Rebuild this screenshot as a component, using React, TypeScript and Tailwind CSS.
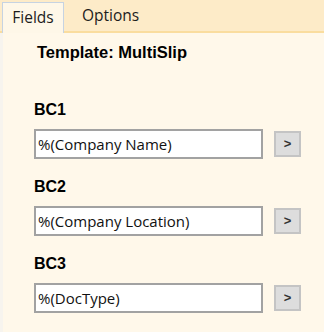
const fields = [
  { label: 'BC1', value: '%(Company Name)' },
  { label: 'BC2', value: '%(Company Location)' },
  { label: 'BC3', value: '%(DocType)' },
]

export default function App() {
  return (
    <div className="w-[324px] h-[332px] flex flex-col bg-[#fff8ea] font-['Open_Sans',sans-serif] text-[#000] overflow-hidden">
      {/* Tab strip */}
      <div className="h-[33px] flex items-end pl-[2px] bg-[#fdebc8] border-b-2 border-[#fadd9f] shrink-0">
        <div className="h-[31px] w-[62px] -mb-[2px] flex items-center justify-center bg-[#fef7e8] border border-b-0 border-[#c6d3e2] text-[15.5px] text-[#1c1c1c]">
          Fields
        </div>
        <div className="h-[31px] flex items-center pl-[18px] text-[15.5px] text-[#1c1c1c]">Options</div>
      </div>

      {/* Body */}
      <div className="flex-1 flex border-l-[3px] border-[#f7f4ee]">
        <div className="flex flex-col pl-[31px] pt-[9px] font-['Liberation_Sans',Arial,sans-serif]">
          <div className="pl-[3px] text-[16.5px] leading-[20px] font-bold">Template: MultiSlip</div>

          <div className="flex flex-col gap-[18px] mt-[38px]">
            {fields.map((f) => (
              <div key={f.label} className="flex flex-col gap-[9px]">
                <div className="text-[16px] leading-[20px] font-bold">{f.label}</div>
                <div className="flex items-center gap-[11px]">
                  <div className="w-[229px] h-[30px] flex items-center px-[2px] bg-white border-2 border-[#a2a2a2] font-['Open_Sans',sans-serif] text-[15px] text-[#111]">
                    {f.value}
                  </div>
                  <div className="w-[27px] h-[26px] flex items-center justify-center bg-[#dddddd] border-2 border-[#c4c4c4] text-[13px] font-bold text-[#333]">
                    &gt;
                  </div>
                </div>
              </div>
            ))}
          </div>
        </div>
      </div>
    </div>
  )
}
